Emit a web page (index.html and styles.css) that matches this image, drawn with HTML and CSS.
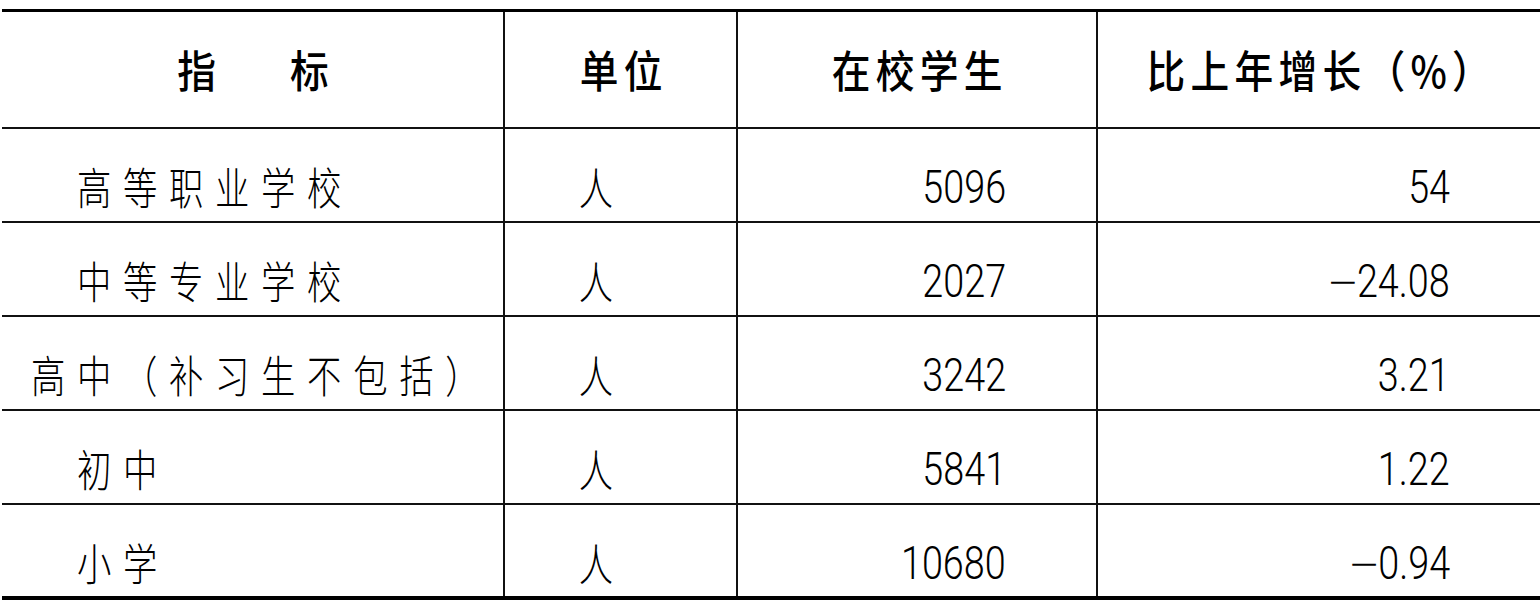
FILE: index.html
```html
<!DOCTYPE html>
<html lang="zh-CN">
<head>
<meta charset="utf-8">
<title>在校学生</title>
<link rel="stylesheet" href="styles.css">
</head>
<body>
<table class="stat">
  <colgroup>
    <col class="c-name">
    <col class="c-unit">
    <col class="c-num">
    <col class="c-rate">
  </colgroup>
  <thead>
    <tr class="head">
      <th><span class="ht ht-wide">指标</span></th>
      <th><span class="ht">单位</span></th>
      <th><span class="ht">在校学生</span></th>
      <th><span class="ht">比上年增长（%）</span></th>
    </tr>
  </thead>
  <tbody>
    <tr class="row">
      <td class="name"><span class="zh">高等职业学校</span></td>
      <td class="unit"><span class="zh">人</span></td>
      <td class="num"><span class="n">5096</span></td>
      <td class="num"><span class="n">54</span></td>
    </tr>
    <tr class="row">
      <td class="name"><span class="zh">中等专业学校</span></td>
      <td class="unit"><span class="zh">人</span></td>
      <td class="num"><span class="n">2027</span></td>
      <td class="num"><span class="n"><span class="minus">−</span>24.08</span></td>
    </tr>
    <tr class="row">
      <td class="name name-long"><span class="zh">高中（补习生不包括）</span></td>
      <td class="unit"><span class="zh">人</span></td>
      <td class="num"><span class="n">3242</span></td>
      <td class="num"><span class="n">3.21</span></td>
    </tr>
    <tr class="row">
      <td class="name"><span class="zh">初中</span></td>
      <td class="unit"><span class="zh">人</span></td>
      <td class="num"><span class="n">5841</span></td>
      <td class="num"><span class="n">1.22</span></td>
    </tr>
    <tr class="row">
      <td class="name"><span class="zh">小学</span></td>
      <td class="unit"><span class="zh">人</span></td>
      <td class="num"><span class="n">10680</span></td>
      <td class="num"><span class="n"><span class="minus">−</span>0.94</span></td>
    </tr>
  </tbody>
</table>
</body>
</html>
```

FILE: styles.css
```css
html, body {
  margin: 0;
  padding: 0;
  background: #fff;
}

body {
  width: 1540px;
  height: 600px;
  overflow: hidden;
  color: #000;
  font-family: "Noto Sans CJK SC", "Noto Sans", sans-serif;
}

.stat {
  border-collapse: collapse;
  table-layout: fixed;
  width: 1538px;
  margin: 9px 0 0 2px;
  border-top: 3px solid #000;
  border-bottom: 4px solid #000;
}

.c-name { width: 502px; }
.c-unit { width: 233px; }
.c-num  { width: 360px; }
.c-rate { width: 443px; }

.stat th,
.stat td {
  padding: 0;
  border-top: 2px solid #111;
  border-left: 2px solid #111;
  overflow: visible;
  white-space: nowrap;
}

.stat th:first-child,
.stat td:first-child {
  border-left: none;
}

.stat thead th {
  border-top: 3px solid #000;
}

.head th {
  height: 115px;
  text-align: center;
  vertical-align: middle;
  font-weight: 500;
}

.ht {
  display: inline-block;
  font-size: 44px;
  line-height: 1;
  letter-spacing: 6px;
  padding-left: 6px;
  transform: scaleX(0.88);
  transform-origin: center;
}

.ht-wide {
  letter-spacing: 84px;
  padding-left: 84px;
}

.row td {
  height: 94px;
  vertical-align: middle;
  padding-top: 24px;
  box-sizing: border-box;
}

.zh {
  display: inline-block;
  font-size: 44px;
  font-weight: 300;
  line-height: 1;
  letter-spacing: 15px;
  transform: scaleX(0.78);
  transform-origin: left center;
}

.name {
  text-align: left;
  padding-left: 75px !important;
}

.name-long {
  padding-left: 29px !important;
}

.unit {
  text-align: center;
  padding-right: 50px !important;
}

.unit .zh {
  letter-spacing: 0;
  transform-origin: center;
}

.num {
  text-align: right;
  padding-right: 90px !important;
}

.n {
  display: inline-block;
  font-family: Roboto, "Liberation Sans", sans-serif;
  font-size: 46px;
  font-weight: 300;
  line-height: 1;
  transform: scaleX(0.82);
  transform-origin: right center;
}

.minus {
  font-family: "DejaVu Sans", "Liberation Sans", sans-serif;
  font-weight: 200;
  margin-right: -2px;
}
```
